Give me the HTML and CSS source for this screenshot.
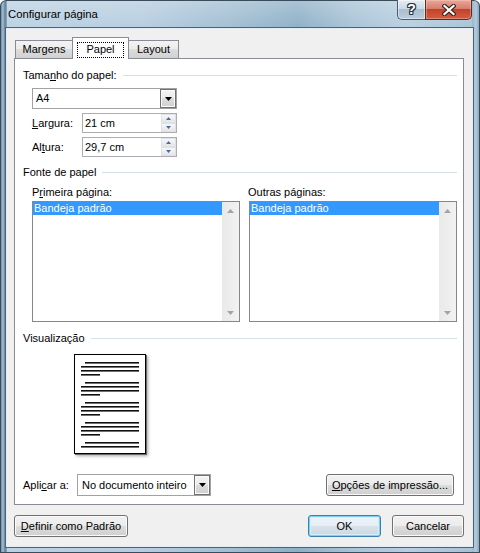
FILE: index.html
```html
<!DOCTYPE html>
<html lang="pt-BR">
<head>
<meta charset="utf-8">
<title>Configurar página</title>
<link rel="stylesheet" href="styles.css">
</head>
<body>
<div class="window">
  <div class="titlebar">
    <span class="title">Configurar página</span>
    <div class="caption-btns">
      <div class="cap-btn help">?</div>
      <div class="cap-btn close">
        <svg width="14" height="12" viewBox="0 0 14 12"><path d="M2.5 2L11.5 10M11.5 2L2.5 10" stroke="#3b2420" stroke-width="4.4" stroke-linecap="square"/><path d="M2.5 2L11.5 10M11.5 2L2.5 10" stroke="#fff" stroke-width="2.2" stroke-linecap="square"/></svg>
      </div>
    </div>
  </div>
  <div class="client">
    <div class="tabs">
      <div class="tab tab-m">Margens</div>
      <div class="tab tab-p active"><span class="focus">Papel</span></div>
      <div class="tab tab-l">Layout</div>
    </div>
    <div class="panel">
      <div class="ghead g1"><span>Tama<u>n</u>ho do papel:</span></div>
      <div class="combo combo-paper">
        <span class="combo-text">A4</span>
        <span class="combo-btn"><svg width="7" height="4" viewBox="0 0 7 4"><path d="M0 0H7L3.5 4Z" fill="#000"/></svg></span>
      </div>
      <div class="frow">
        <span class="flabel"><u>L</u>argura:</span>
        <div class="spin">
          <span class="spin-text">21 cm</span>
          <span class="spin-btns">
            <span class="sb"><svg width="5" height="3" viewBox="0 0 5 3"><path d="M2.5 0L5 3H0Z" fill="#4d6a9c"/></svg></span>
            <span class="sb"><svg width="5" height="3" viewBox="0 0 5 3"><path d="M0 0H5L2.5 3Z" fill="#4d6a9c"/></svg></span>
          </span>
        </div>
      </div>
      <div class="frow">
        <span class="flabel">Al<u>t</u>ura:</span>
        <div class="spin">
          <span class="spin-text">29,7 cm</span>
          <span class="spin-btns">
            <span class="sb"><svg width="5" height="3" viewBox="0 0 5 3"><path d="M2.5 0L5 3H0Z" fill="#4d6a9c"/></svg></span>
            <span class="sb"><svg width="5" height="3" viewBox="0 0 5 3"><path d="M0 0H5L2.5 3Z" fill="#4d6a9c"/></svg></span>
          </span>
        </div>
      </div>
      <div class="ghead g2"><span>Fonte de papel</span></div>
      <div class="cols">
        <div class="col">
          <div class="clabel">P<u>r</u>imeira página:</div>
          <div class="list">
            <div class="items"><div class="item sel">Bandeja padrão</div></div>
            <div class="vscroll">
              <span class="sarrow"><svg width="7" height="4" viewBox="0 0 7 4"><path d="M3.5 0L7 4H0Z" fill="#a3a3a3"/></svg></span>
              <span class="sarrow"><svg width="7" height="4" viewBox="0 0 7 4"><path d="M0 0H7L3.5 4Z" fill="#a3a3a3"/></svg></span>
            </div>
          </div>
        </div>
        <div class="col">
          <div class="clabel clabel-r">Outras páginas:</div>
          <div class="list">
            <div class="items"><div class="item sel">Bandeja padrão</div></div>
            <div class="vscroll">
              <span class="sarrow"><svg width="7" height="4" viewBox="0 0 7 4"><path d="M3.5 0L7 4H0Z" fill="#a3a3a3"/></svg></span>
              <span class="sarrow"><svg width="7" height="4" viewBox="0 0 7 4"><path d="M0 0H7L3.5 4Z" fill="#a3a3a3"/></svg></span>
            </div>
          </div>
        </div>
      </div>
      <div class="ghead g3"><span>Visualização</span></div>
      <div class="preview">
        <svg width="70" height="98" viewBox="0 0 70 98">
          <g fill="#111">
            <rect x="10" y="7" width="54" height="1.6"/><rect x="6" y="11" width="58" height="1.6"/><rect x="6" y="15" width="58" height="1.6"/><rect x="6" y="19" width="19" height="1.6"/>
            <rect x="10" y="27" width="54" height="1.6"/><rect x="6" y="31" width="58" height="1.6"/><rect x="6" y="35" width="58" height="1.6"/><rect x="6" y="39" width="19" height="1.6"/>
            <rect x="10" y="47" width="54" height="1.6"/><rect x="6" y="51" width="58" height="1.6"/><rect x="6" y="55" width="58" height="1.6"/><rect x="6" y="59" width="19" height="1.6"/>
            <rect x="10" y="67" width="54" height="1.6"/><rect x="6" y="71" width="58" height="1.6"/><rect x="6" y="75" width="58" height="1.6"/><rect x="6" y="79" width="19" height="1.6"/>
            <rect x="10" y="87" width="54" height="1.6"/><rect x="6" y="91" width="58" height="1.6"/>
          </g>
        </svg>
      </div>
      <div class="apply-row">
        <span class="alabel">Apli<u>c</u>ar a:</span>
        <div class="combo combo-apply">
          <span class="combo-text">No documento inteiro</span>
          <span class="combo-btn"><svg width="7" height="4" viewBox="0 0 7 4"><path d="M0 0H7L3.5 4Z" fill="#000"/></svg></span>
        </div>
        <div class="btn btn-print"><u>O</u>pções de impressão...</div>
      </div>
    </div>
    <div class="bottom">
      <div class="btn btn-def"><u>D</u>efinir como Padrão</div>
      <div class="btn btn-ok">OK</div>
      <div class="btn btn-cancel">Cancelar</div>
    </div>
  </div>
</div>
</body>
</html>
```
FILE: styles.css
```css
* { box-sizing: border-box; margin: 0; padding: 0; }
html, body { width: 480px; height: 553px; overflow: hidden; }
body {
  background: #ffffff;
  font-family: "Liberation Sans", Arial, sans-serif;
  font-size: 11px;
  color: #000;
}
u { text-decoration: underline; text-underline-offset: 1px; }

.window {
  width: 480px;
  height: 553px;
  display: flex;
  flex-direction: column;
  padding: 0 8px 7px 7px;
  border-radius: 6px 6px 0 0;
  background:
    linear-gradient(to right, #34495d 0, #34495d 1px, #6f8fa8 1px, #a5c0d3 3px, #5f7f99 5px, #8eabc1 7px) left top / 7px 100% no-repeat,
    linear-gradient(to left, #34495d 0, #34495d 1px, #8aa7bd 1px, #b3cadb 4px, #9cb7cb 8px) right top / 8px 100% no-repeat,
    linear-gradient(to bottom, rgba(255,255,255,0.25), rgba(255,255,255,0) 30px),
    linear-gradient(to right, #bcd2e2 0%, #b6cddf 30%, #a1bed2 48%, #8db0c7 62%, #a9c4d7 74%, #b7cfe0 85%, #a6c1d4 100%);
  box-shadow: inset 0 0 0 1px #3a4b5c;
}

.titlebar {
  height: 29px;
  display: flex;
  align-items: flex-start;
  padding-left: 1px;
}
.title {
  font-size: 11.3px;
  line-height: 28px;
  color: #000;
}
.caption-btns {
  margin-left: auto;
  display: flex;
  height: 20px;
}
.cap-btn {
  height: 20px;
  display: flex;
  align-items: center;
  justify-content: center;
}
.help {
  width: 28px;
  border: 1px solid #4b5d6e;
  border-top: none;
  border-right: none;
  border-radius: 0 0 0 5px;
  background: linear-gradient(#e4edf4, #cbdae6 45%, #a8bfd0 50%, #b9cedd 100%);
  box-shadow: inset 0 0 0 1px rgba(255,255,255,0.45);
  color: #fff;
  font-weight: bold;
  font-size: 14px;
  line-height: 19px;
  text-shadow: 1px 0 0 #2b3642, -1px 0 0 #2b3642, 0 1px 0 #2b3642, 0 -1px 0 #2b3642, 1px 1px 0 #2b3642, -1px -1px 0 #2b3642, 1px -1px 0 #2b3642, -1px 1px 0 #2b3642;
}
.close {
  width: 47px;
  border: 1px solid #5b2c24;
  border-top: none;
  border-radius: 0 0 5px 0;
  background: linear-gradient(#eaa899, #d77e6c 45%, #c2432a 50%, #d35c42 100%);
  box-shadow: inset 0 0 0 1px rgba(255,220,210,0.35);
}

.client {
  flex: 1;
  background: #f0f0f0;
  display: flex;
  flex-direction: column;
  padding: 8px 8px 9px 7px;
  box-shadow: 0 0 0 1px #e4ecf2, 0 0 0 2px #4f6378;
}

.tabs {
  display: flex;
  align-items: flex-end;
  height: 21px;
  padding-left: 1px;
}
.tab {
  height: 18px;
  border: 1px solid #898c95;
  border-bottom: none;
  background: linear-gradient(#f3f3f3, #ebebeb 50%, #dddddd 50%, #d1d1d1);
  text-align: center;
  line-height: 17px;
  white-space: nowrap;
}
.tab-m { width: 58px; }
.tab-p { width: 57px; margin-left: -1px; }
.tab-l { width: 51px; margin-left: -1px; }
.tab.active {
  height: 22px;
  margin-bottom: -1px;
  background: #fff;
  position: relative;
  z-index: 1;
  padding: 4px 4px 0 4px;
}
.focus {
  display: block;
  height: 16px;
  border: 1px dotted #000;
  line-height: 12px;
}

.panel {
  flex: 1;
  background: #fff;
  border: 1px solid #898c95;
  display: flex;
  flex-direction: column;
  padding: 0 6px 8px 8px;
}

.ghead {
  display: flex;
  align-items: center;
  height: 14px;
  line-height: 14px;
  white-space: nowrap;
}
.ghead::after {
  content: "";
  flex: 1;
  height: 1px;
  background: #d5dfe5;
  margin-left: 6px;
}
.g1 { margin-top: 9px; }
.g2 { margin-top: 8px; }
.g3 { margin-top: 9px; }

.combo {
  display: flex;
  border: 1px solid #a2a2a2;
  background: #fff;
}
.combo-text { flex: 1; padding-left: 3px; white-space: nowrap; }
.combo-btn {
  width: 16px;
  border: 1px solid #707070;
  background: linear-gradient(#f4f4f4, #ebebeb 50%, #dcdcdc 50%, #d0d0d0);
  box-shadow: inset 0 0 0 1px #fbfbfb;
  display: flex;
  align-items: center;
  justify-content: center;
}
.combo-paper {
  margin: 6px 0 0 9px;
  width: 145px;
  height: 21px;
}
.combo-paper .combo-text { line-height: 19px; }

.frow {
  display: flex;
  align-items: center;
  margin: 4px 0 0 9px;
  height: 20px;
}
.flabel { width: 50px; }
.spin {
  width: 95px;
  height: 20px;
  border: 1px solid #abadb3;
  display: flex;
  background: #fff;
}
.spin-text { flex: 1; padding-left: 2px; line-height: 18px; }
.spin-btns {
  width: 16px;
  display: flex;
  flex-direction: column;
  padding: 0 0 0 1px;
}
.sb {
  flex: 1;
  display: flex;
  align-items: center;
  justify-content: center;
  border: 1px solid #dde2e8;
  background: linear-gradient(#f7f7f7, #e6e6e6);
}

.cols {
  display: flex;
  gap: 9px;
  margin: 6px 0 0 9px;
}
.col { width: 208px; }
.clabel { height: 14px; line-height: 14px; white-space: nowrap; }
.clabel-r { margin-left: -1px; }
.list {
  margin-top: 2px;
  height: 121px;
  border: 1px solid #828790;
  background: #fff;
  display: flex;
}
.items { flex: 1; }
.item { height: 13px; line-height: 13px; padding-left: 1px; white-space: nowrap; }
.item.sel { background: #3399ff; color: #fff; }
.vscroll {
  width: 17px;
  background: linear-gradient(to right, #e9e9e9, #f2f2f2);
  display: flex;
  flex-direction: column;
  justify-content: space-between;
}
.sarrow {
  height: 17px;
  display: flex;
  align-items: center;
  justify-content: center;
}

.preview {
  margin: 9px 0 0 51px;
  width: 72px;
  height: 100px;
  border: 1px solid #000;
  background: #fff;
  box-shadow: 1px 1px 0 #6a6a6a, 2px 2px 3px rgba(0,0,0,0.35);
}
.preview svg { display: block; }

.apply-row {
  margin-top: auto;
  display: flex;
  align-items: center;
  height: 22px;
}
.alabel { width: 54px; }
.combo-apply { width: 134px; height: 22px; }
.combo-apply .combo-text { line-height: 20px; padding-left: 4px; }

.btn {
  height: 22px;
  border: 1px solid #707070;
  border-radius: 3px;
  background: linear-gradient(#f2f2f2, #ebebeb 50%, #dddddd 50%, #cfcfcf);
  box-shadow: inset 0 0 0 1px #fafafa;
  text-align: center;
  line-height: 20px;
  white-space: nowrap;
}
.btn-print { margin-left: auto; margin-right: 3px; width: 128px; }

.bottom {
  display: flex;
  margin-top: 10px;
  height: 22px;
  gap: 11px;
}
.btn-def { width: 114px; margin-right: auto; }
.btn-ok {
  width: 73px;
  border-color: #3c7fb1;
  box-shadow: inset 0 0 0 1px #7fd0f3, inset 0 0 0 2px #d6eefb;
  background: linear-gradient(#eef4f8, #e6eef4 50%, #d8e2ea 50%, #ccd8e2);
}
.btn-cancel { width: 72px; }
```
